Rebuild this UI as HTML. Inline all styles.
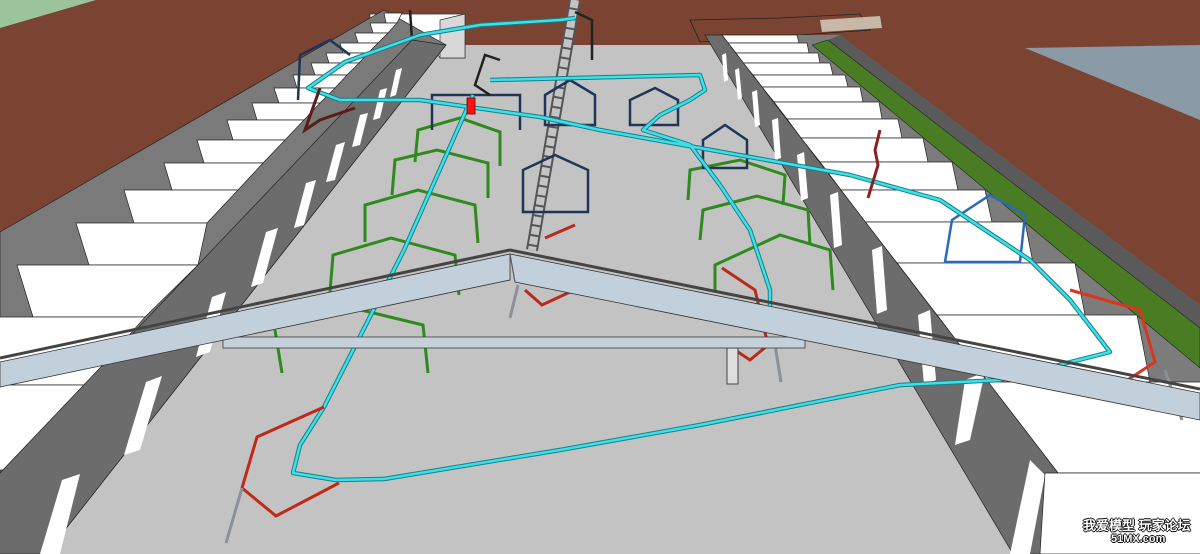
<!DOCTYPE html>
<html><head><meta charset="utf-8"><style>
html,body{margin:0;padding:0;background:#7a4332;}
svg{display:block}
.wm{position:absolute;font-family:"Liberation Sans","WenQuanYi Zen Hei",sans-serif;color:#fff;font-weight:bold;text-shadow:1px 0 #000,-1px 0 #000,0 1px #000,0 -1px #000;}
</style></head><body>
<div style="position:relative;width:1200px;height:554px;overflow:hidden">
<svg width="1200" height="554" viewBox="0 0 1200 554" xmlns="http://www.w3.org/2000/svg">
<rect width="1200" height="554" fill="#7a4332"/>
<polygon points="0,0 96,0 0,28" fill="#9cc49a"/>
<polygon points="1025,48 1200,45 1200,120" fill="#8a9aa6"/>
<!-- floor -->
<polygon points="446,45 711,45 1013,554 46,554" fill="#c3c3c3"/>
<!-- far boxes -->
<polygon points="370,14 465,14 465,58 440,58 430,40 370,40" fill="#fff" stroke="#333" stroke-width="0.7"/>
<polygon points="440,20 465,14 465,58 440,58" fill="#d8d8d8" stroke="#333" stroke-width="0.7"/>
<!-- fence top right -->
<polygon points="690,20 780,18 860,14 870,30 700,42" fill="none" stroke="#222" stroke-width="0.8"/>
<polygon points="820,20 880,16 882,28 822,32" fill="#c8b8a8"/>
<!-- LEFT SIDE -->
<polygon points="0,232 384,10 446,45 46,554 0,554" fill="#7a7a7a" stroke="#222" stroke-width="0.7"/>
<g fill="#fff" stroke="#222" stroke-width="0.7">
<polygon points="384,13 402,13 397,23 386,23"/>
<polygon points="370,23 397,23 388,33 373,33"/>
<polygon points="355,33 388,33 378,43 358,43"/>
<polygon points="340,43 378,43 368,53 343,53"/>
<polygon points="326,53 368,53 359,63 329,63"/>
<polygon points="311,63 359,63 347,75 315,75"/>
<polygon points="293,75 347,75 335,88 297,88"/>
<polygon points="274,88 335,88 320,103 279,103"/>
<polygon points="252,103 320,103 304,120 257,120"/>
<polygon points="227,120 304,120 285,140 233,140"/>
<polygon points="197,140 285,140 263,163 204,163"/>
<polygon points="164,163 263,163 238,190 172,190"/>
<polygon points="124,190 238,190 207,223 134,223"/>
<polygon points="76,223 207,223 198,265 89,265"/>
<polygon points="17,265 198,265 145,317 33,317"/>
<polygon points="-60,317 145,317 86,385 -40,385"/>
<polygon points="-150,385 86,385 6,470 -120,470"/>
</g>
<!-- left inner face -->
<polygon points="412,40 446,45 46,554 -77,554" fill="#6c6c6c" stroke="#222" stroke-width="0.7"/>
<g fill="#fff">
<polygon points="396,70 402,68 396,95 390,97"/>
<polygon points="380,90 387,88 380,118 373,120"/>
<polygon points="360,115 368,113 360,145 352,147"/>
<polygon points="336,145 345,142 335,180 326,182"/>
<polygon points="306,183 316,180 304,225 294,228"/>
<polygon points="266,232 278,228 263,283 251,287"/>
<polygon points="212,297 226,292 210,352 196,357"/>
<polygon points="146,382 162,376 140,450 124,455"/>
<polygon points="62,480 80,474 60,554 40,554"/>
</g>
<!-- RIGHT SIDE -->
<polygon points="705,35 840,35 1200,305 1200,554 1013,554" fill="#7c7c7c"/>
<polygon points="828,40 840,35 1200,305 1200,328" fill="#5a5a5a"/>
<polygon points="812,45 828,40 1200,328 1200,368" fill="#4a7c23" stroke="#222" stroke-width="0.6"/>
<g fill="#fff" stroke="#222" stroke-width="0.7">
<polygon points="722,35 797,35 799,43 728,43"/>
<polygon points="728,43 807,43 809,53 736,53"/>
<polygon points="736,53 818,53 820,63 743,63"/>
<polygon points="743,63 830,63 833,75 753,75"/>
<polygon points="753,75 845,75 848,87 762,87"/>
<polygon points="762,87 860,87 863,102 774,102"/>
<polygon points="774,102 879,102 882,119 787,119"/>
<polygon points="787,119 898,119 902,138 801,138"/>
<polygon points="801,138 923,138 928,162 820,162"/>
<polygon points="820,162 952,162 958,190 841,190"/>
<polygon points="841,190 985,190 992,222 865,222"/>
<polygon points="865,222 1025,222 1033,263 897,263"/>
<polygon points="897,263 1075,263 1085,315 937,315"/>
<polygon points="937,315 1137,315 1150,382 988,382"/>
<polygon points="988,382 1210,382 1210,473 1058,473"/>
</g>
<!-- right inner face -->
<polygon points="705,35 722,35 1058,473 1045,554 1013,554" fill="#6c6c6c" stroke="#222" stroke-width="0.7"/>
<g fill="#fff">
<polygon points="722,55 726,53 728,80 724,82"/>
<polygon points="735,70 739,68 742,98 738,100"/>
<polygon points="752,92 757,90 760,125 755,127"/>
<polygon points="772,120 778,118 781,158 775,160"/>
<polygon points="797,155 804,152 808,198 801,201"/>
<polygon points="830,195 838,192 842,245 834,248"/>
<polygon points="872,250 882,246 887,310 877,314"/>
<polygon points="918,315 930,310 936,380 924,385"/>
<polygon points="965,380 985,372 970,440 955,445"/>
<polygon points="1030,460 1045,475 1030,554 1010,554"/>
</g>
<polygon points="1045,473 1210,473 1210,554 1040,554" fill="#fff" stroke="#222" stroke-width="0.7"/>
<!-- crane mast -->
<line x1="575" y1="0" x2="532" y2="250" stroke="#555" stroke-width="12"/>
<line x1="575" y1="0" x2="532" y2="250" stroke="#c4c4c4" stroke-width="8" stroke-dasharray="8 2"/>
<!-- green frames -->
<g fill="none" stroke="#2f8a1e" stroke-width="3" stroke-linejoin="miter">
<polyline points="415,162 418,130 460,118 500,132 500,166"/>
<polyline points="392,195 395,160 437,150 488,163 488,198"/>
<polyline points="365,242 365,205 418,190 475,205 478,243"/>
<polyline points="330,292 333,255 391,238 455,255 459,295"/>
<polyline points="275,330 282,373"/>
<polyline points="361,310 423,325 428,373"/>
<polyline points="688,200 690,170 740,160 785,175 783,205"/>
<polyline points="700,240 703,210 757,196 808,210 810,245"/>
<polyline points="715,290 715,265 780,235 830,250 833,290"/>
</g>
<!-- blue frames -->
<g fill="none" stroke="#1e3558" stroke-width="2.5">
<polygon points="630,125 630,100 655,88 678,100 678,125"/>
<polygon points="703,168 703,140 725,125 747,140 747,168"/>
<polygon points="523,212 523,170 555,155 588,170 588,212"/>
<polygon points="545,125 545,95 570,80 595,95 595,125"/>
<polyline points="432,130 432,95 520,95 520,130"/>
<polyline points="298,100 300,55 330,40 350,55"/>
</g>
<polygon points="945,262 952,220 990,195 1025,215 1020,262" fill="none" stroke="#2a6ab8" stroke-width="2.5"/>
<!-- black bits -->
<g fill="none" stroke="#222" stroke-width="2.5">
<polyline points="500,60 485,55 475,85 490,95"/>
<polyline points="410,10 412,40"/>
<polyline points="575,12 592,20 592,60"/>
</g>
<!-- cyan pipes -->
<g fill="none" stroke="#1a7f86" stroke-width="4.5" stroke-linejoin="round">
<polyline points="404,250 324,407 300,445 293,473 336,480 384,479 560,450 700,425 900,385 1000,380 1110,352 1070,300 1030,260 940,200 850,175 600,130 540,117 420,100 340,100 308,88 345,62 420,35 480,25 560,20 575,18"/>
<polyline points="473,95 404,250"/>
<polyline points="490,80 700,75 705,90 690,100 660,115 643,130 690,145 720,185 750,230 770,290 770,330"/>
</g>
<g fill="none" stroke="#3ce0ea" stroke-width="2.5" stroke-linejoin="round">
<polyline points="404,250 324,407 300,445 293,473 336,480 384,479 560,450 700,425 900,385 1000,380 1110,352 1070,300 1030,260 940,200 850,175 600,130 540,117 420,100 340,100 308,88 345,62 420,35 480,25 560,20 575,18"/>
<polyline points="473,95 404,250"/>
<polyline points="490,80 700,75 705,90 690,100 660,115 643,130 690,145 720,185 750,230 770,290 770,330"/>
</g>
<!-- red -->
<g fill="none" stroke-width="3" stroke-linejoin="miter">
<polyline points="324,407 257,437 242,488 276,516 339,483" stroke="#c0281a"/>
<polyline points="1070,290 1140,310 1155,362 1120,385" stroke="#d8361e"/>
<polyline points="722,268 755,290 768,345 750,360 735,350" stroke="#b82a1c"/>
<polyline points="575,225 545,238" stroke="#b82a1c"/>
<polyline points="525,290 542,305 570,292" stroke="#b82a1c"/>
<polyline points="880,130 875,150 878,165 868,198" stroke="#8a2020"/>
<polyline points="320,88 305,130 320,120 355,108" stroke="#5a1c18"/>
</g>
<rect x="467" y="98" width="8" height="16" fill="#ff1010" stroke="#600" stroke-width="0.8"/>
<!-- gray sticks -->
<g stroke="#8a9198" stroke-width="3">
<line x1="242" y1="488" x2="226" y2="543"/>
<line x1="775" y1="345" x2="781" y2="382"/>
<line x1="518" y1="285" x2="510" y2="318"/>
<line x1="1165" y1="370" x2="1182" y2="420"/>
</g>
<rect x="727" y="348" width="11" height="36" fill="#ddd" stroke="#444"/>
<!-- horizontal beam -->
<polygon points="223,337 805,337 805,348 223,348" fill="#c4d0da" stroke="#333" stroke-width="0.8"/>
<!-- truss beams -->
<polygon points="0,362 510,254 510,280 0,387" fill="#c2d0dc" stroke="#333" stroke-width="0.8"/>
<polygon points="510,254 1200,393 1200,420 515,282" fill="#c2d0dc" stroke="#333" stroke-width="0.8"/>
<polyline points="0,358 510,250 1200,389" fill="none" stroke="#444" stroke-width="3"/>
<line x1="510" y1="254" x2="515" y2="282" stroke="#556" stroke-width="1"/>
</svg>
<div class="wm" style="left:1083px;top:515px;font-size:13px">我爱模型 玩家论坛</div>
<div class="wm" style="left:1111px;top:533px;font-size:11px">51MX.com</div>
</div>
</body></html>
